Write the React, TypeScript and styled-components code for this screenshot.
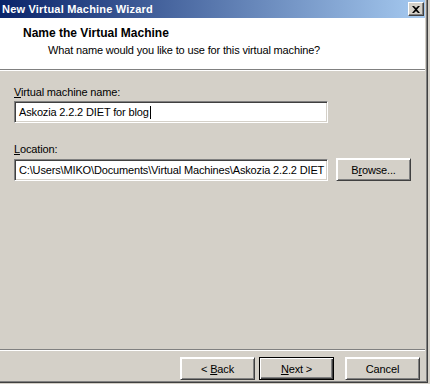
import React from "react";
import styled, { createGlobalStyle } from "styled-components";

const GlobalStyle = createGlobalStyle`
  html, body {
    margin: 0;
    padding: 0;
    background: #d4d0c8;
  }
  body {
    font-family: "Liberation Sans", Arial, sans-serif;
    font-size: 11px;
    letter-spacing: -0.15px;
    color: #000;
  }
`;

const Frame = styled.div`
  width: 430px;
  height: 384px;
  background: #d4d0c8;
  overflow: hidden;
`;

const Window = styled.div`
  box-sizing: border-box;
  width: 428px;
  height: 383px;
  padding-right: 2px;
  border-right: 1px solid #404040;
  border-bottom: 1px solid #404040;
  box-shadow: inset -1px -1px 0 #808080;
  display: flex;
  flex-direction: column;
`;

const TitleBar = styled.div`
  height: 18px;
  flex: none;
  display: flex;
  align-items: center;
  justify-content: space-between;
  padding: 0 1px 0 2px;
  background: linear-gradient(to right, #0a246a, #a6caf0);
`;

const TitleText = styled.span`
  color: #fff;
  font-weight: bold;
  font-size: 11px;
  letter-spacing: 0.2px;
`;

const CloseButton = styled.div`
  box-sizing: border-box;
  width: 16px;
  height: 14px;
  background: #d4d0c8;
  border-top: 1px solid #fff;
  border-left: 1px solid #fff;
  border-right: 1px solid #404040;
  border-bottom: 1px solid #404040;
  box-shadow: inset -1px -1px 0 #808080;
  display: flex;
  align-items: center;
  justify-content: center;
`;

const Header = styled.div`
  height: 52px;
  flex: none;
  background: #fff;
  border-bottom: 1px solid #808080;
  box-shadow: 0 1px 0 #fff;
  box-sizing: border-box;
  padding: 8px 0 0 23px;
`;

const HeaderTitle = styled.div`
  font-weight: bold;
  font-size: 12px;
  letter-spacing: 0;
  line-height: 14px;
`;

const HeaderSub = styled.div`
  line-height: 13px;
  margin: 4px 0 0 25px;
`;

const Body = styled.div`
  flex: 1;
  padding: 16px 0 0 14px;
  display: flex;
  flex-direction: column;
`;

const Label = styled.div<{ $gap: number }>`
  line-height: 13px;
  margin-top: ${(p) => p.$gap}px;
  margin-bottom: 2px;
`;

const Key = styled.span`
  text-decoration: underline;
`;

const Row = styled.div`
  display: flex;
  align-items: center;
  gap: 8px;
`;

const TextBox = styled.div`
  box-sizing: border-box;
  width: 314px;
  height: 22px;
  background: #fff;
  border-top: 1px solid #808080;
  border-left: 1px solid #808080;
  border-right: 1px solid #fff;
  border-bottom: 1px solid #fff;
  box-shadow: inset 1px 1px 0 #404040, inset -1px -1px 0 #d4d0c8;
  padding: 0 3px 0 4px;
  display: flex;
  align-items: center;
  white-space: nowrap;
  overflow: hidden;
`;

const Caret = styled.span`
  display: inline-block;
  width: 1px;
  height: 13px;
  background: #000;
  margin-left: 1px;
`;

const Button = styled.div<{ $default?: boolean }>`
  box-sizing: border-box;
  width: 75px;
  height: 23px;
  background: #d4d0c8;
  display: flex;
  align-items: center;
  justify-content: center;
  white-space: pre;
  border: 1px solid ${(p) => (p.$default ? "#000" : "transparent")};
  box-shadow: ${(p) =>
    p.$default
      ? "inset 1px 1px 0 #fff, inset -1px -1px 0 #404040, inset -2px -2px 0 #808080"
      : "inset 1px 1px 0 #fff, inset -1px -1px 0 #808080"};
  ${(p) =>
    p.$default
      ? ""
      : "border-top-color:#fff;border-left-color:#fff;border-right-color:#404040;border-bottom-color:#404040;"}
`;

const Divider = styled.div`
  height: 1px;
  flex: none;
  background: #808080;
  border-bottom: 1px solid #fff;
`;

const Footer = styled.div`
  height: 31px;
  flex: none;
  display: flex;
  justify-content: flex-end;
  align-items: flex-start;
  padding: 6px 5px 0 0;
  box-sizing: border-box;
  gap: 4px;
`;

const Spacer = styled.div`
  width: 3px;
`;

export default function App() {
  return (
    <Frame>
      <GlobalStyle />
      <Window>
        <TitleBar>
          <TitleText>New Virtual Machine Wizard</TitleText>
          <CloseButton>
            <svg width="8" height="7" viewBox="0 0 8 7">
              <path d="M0 0h2l2 2 2-2h2L5 3.5 8 7H6L4 5 2 7H0l3-3.5z" fill="#000" />
            </svg>
          </CloseButton>
        </TitleBar>
        <Header>
          <HeaderTitle>Name the Virtual Machine</HeaderTitle>
          <HeaderSub>What name would you like to use for this virtual machine?</HeaderSub>
        </Header>
        <Body>
          <Label $gap={0}>
            <Key>V</Key>irtual machine name:
          </Label>
          <TextBox>
            Askozia 2.2.2 DIET for blog
            <Caret />
          </TextBox>
          <Label $gap={20}>
            <Key>L</Key>ocation:
          </Label>
          <Row>
            <TextBox>C:\Users\MIKO\Documents\Virtual Machines\Askozia 2.2.2 DIET</TextBox>
            <Button>
              <span>
                B<Key>r</Key>owse...
              </span>
            </Button>
          </Row>
        </Body>
        <Divider />
        <Footer>
          <Button>
            <span>
                {"< "}
              <Key>B</Key>ack
            </span>
          </Button>
          <Button $default>
            <span>
              <Key>N</Key>ext &gt;
            </span>
          </Button>
          <Spacer />
          <Button>Cancel</Button>
        </Footer>
      </Window>
    </Frame>
  );
}
